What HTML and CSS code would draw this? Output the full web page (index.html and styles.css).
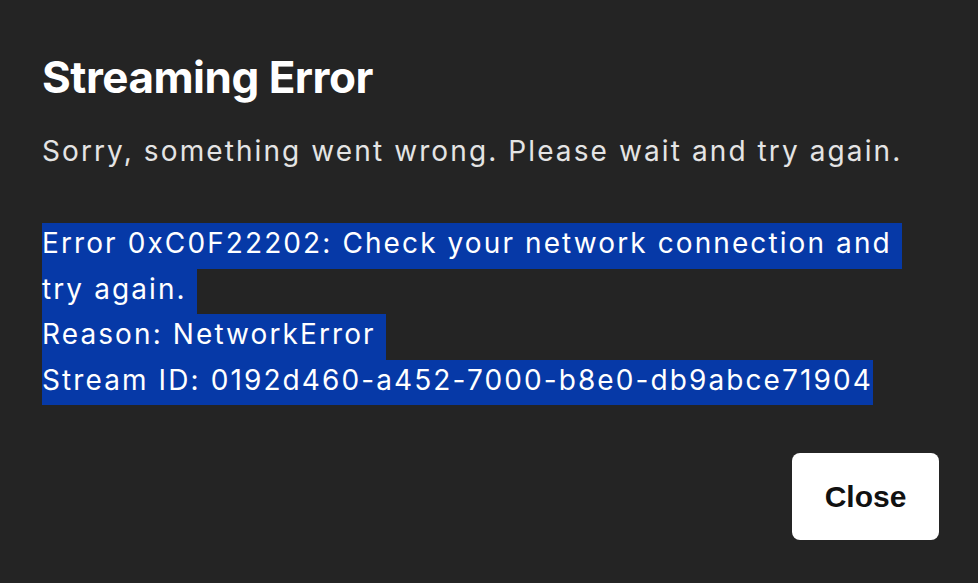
FILE: index.html
```html
<!DOCTYPE html>
<html lang="en">
<head>
<meta charset="utf-8">
<title>Streaming Error</title>
<link rel="stylesheet" href="styles.css">
</head>
<body>
<div class="dialog">
  <h2 class="title">Streaming Error</h2>
  <p class="msg">Sorry, something went wrong. Please wait and try again.</p>
  <div class="details">
    <div class="sel">Error 0xC0F22202: Check your network connection and&nbsp;</div>
    <div class="sel">try again.&nbsp;</div>
    <div class="sel">Reason: NetworkError&nbsp;</div>
    <div class="sel">Stream ID: 0192d460-a452-7000-b8e0-db9abce71904</div>
  </div>
  <div class="actions">
    <button class="close" type="button">Close</button>
  </div>
</div>
</body>
</html>
```
FILE: styles.css
```css
html, body {
  margin: 0;
  padding: 0;
  background: #242424;
  height: 100%;
}
body {
  font-family: Inter, "Noto Sans", sans-serif;
  color: #ffffff;
}
.dialog {
  padding: 55px 39px 43px 42px;
}
.title {
  margin: 0;
  font-size: 44px;
  line-height: 44px;
  font-weight: 700;
  letter-spacing: -0.5px;
  color: #ffffff;
}
.msg {
  margin: 32px 0 0 0;
  font-size: 28px;
  line-height: 40px;
  letter-spacing: 2.1px;
  color: #e4e4e4;
}
.details {
  margin-top: 52px;
  font-size: 28px;
  letter-spacing: 2.1px;
  color: #ffffff;
}
.sel {
  width: fit-content;
  background: #0639a7;
  line-height: 40px;
  height: 40px;
  padding-bottom: 5.5px;
  white-space: nowrap;
}
.actions {
  display: flex;
  justify-content: flex-end;
  margin-top: 48px;
}
.close {
  width: 147px;
  height: 87px;
  border: none;
  border-radius: 8px;
  background: #ffffff;
  color: #111111;
  font-family: "Liberation Sans", Arial, sans-serif;
  font-weight: 700;
  font-size: 30px;
  padding: 0;
  cursor: pointer;
}
```
